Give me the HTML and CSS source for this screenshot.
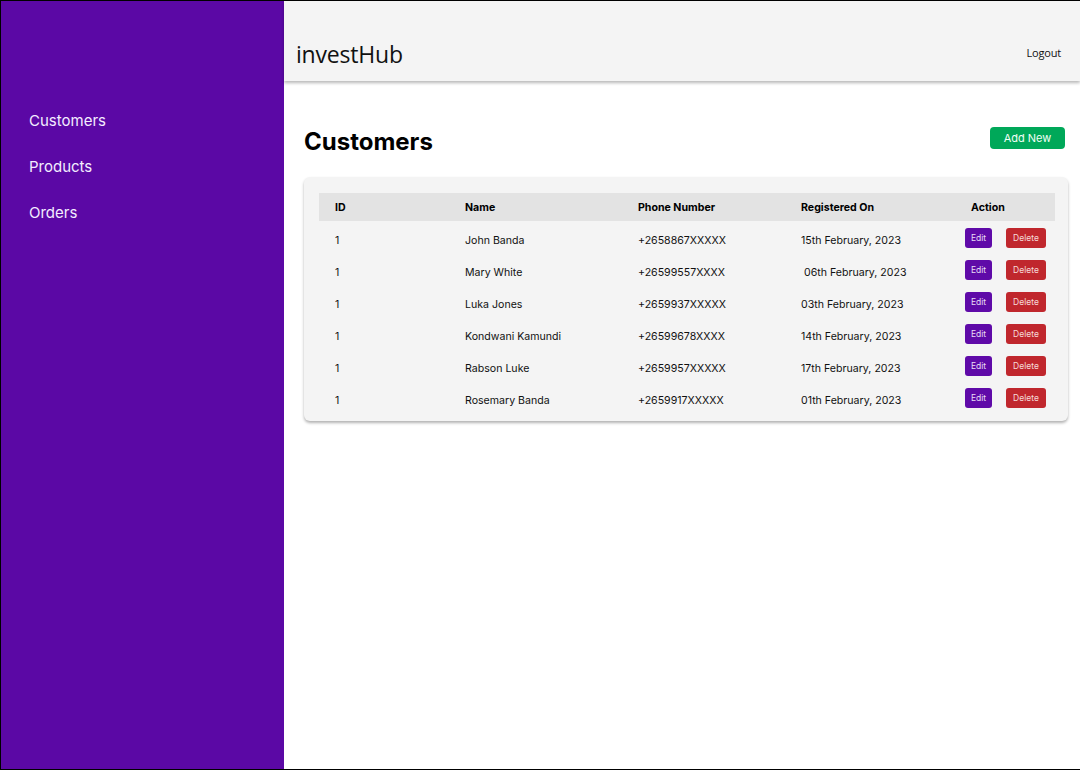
FILE: index.html
```html
<!DOCTYPE html>
<html>
<head>
<meta charset="utf-8">
<link rel="stylesheet" href="styles.css">
</head>
<body>
<div class="frame">
  <aside class="sidebar">
    <nav class="nav">
      <a class="nav-item">Customers</a>
      <a class="nav-item">Products</a>
      <a class="nav-item">Orders</a>
    </nav>
  </aside>
  <div class="main">
    <header class="topbar">
      <div class="brand">investHub</div>
      <div class="logout">Logout</div>
    </header>
    <section class="content">
      <div class="title-row">
        <h1 class="title">Customers</h1>
        <button class="btn-add">Add New</button>
      </div>
      <div class="card">
        <div class="table">
          <div class="row head">
            <div class="c c-id">ID</div>
            <div class="c">Name</div>
            <div class="c">Phone Number</div>
            <div class="c">Registered On</div>
            <div class="c c-act-h">Action</div>
          </div>
          <div class="row">
            <div class="c c-id">1</div>
            <div class="c">John Banda</div>
            <div class="c">+2658867XXXXX</div>
            <div class="c">15th February, 2023</div>
            <div class="c c-act"><button class="btn-edit">Edit</button><button class="btn-del">Delete</button></div>
          </div>
          <div class="row">
            <div class="c c-id">1</div>
            <div class="c">Mary White</div>
            <div class="c">+26599557XXXX</div>
            <div class="c c-shift">06th February, 2023</div>
            <div class="c c-act"><button class="btn-edit">Edit</button><button class="btn-del">Delete</button></div>
          </div>
          <div class="row">
            <div class="c c-id">1</div>
            <div class="c">Luka Jones</div>
            <div class="c">+2659937XXXXX</div>
            <div class="c">03th February, 2023</div>
            <div class="c c-act"><button class="btn-edit">Edit</button><button class="btn-del">Delete</button></div>
          </div>
          <div class="row">
            <div class="c c-id">1</div>
            <div class="c">Kondwani Kamundi</div>
            <div class="c">+26599678XXXX</div>
            <div class="c">14th February, 2023</div>
            <div class="c c-act"><button class="btn-edit">Edit</button><button class="btn-del">Delete</button></div>
          </div>
          <div class="row">
            <div class="c c-id">1</div>
            <div class="c">Rabson Luke</div>
            <div class="c">+2659957XXXXX</div>
            <div class="c">17th February, 2023</div>
            <div class="c c-act"><button class="btn-edit">Edit</button><button class="btn-del">Delete</button></div>
          </div>
          <div class="row">
            <div class="c c-id">1</div>
            <div class="c">Rosemary Banda</div>
            <div class="c">+2659917XXXXX</div>
            <div class="c">01th February, 2023</div>
            <div class="c c-act"><button class="btn-edit">Edit</button><button class="btn-del">Delete</button></div>
          </div>
        </div>
      </div>
    </section>
  </div>
</div>
</body>
</html>
```

FILE: styles.css
```css
* { box-sizing: border-box; }
html, body { margin: 0; padding: 0; background: #fff; }
body { font-family: Inter, "Liberation Sans", sans-serif; }

.frame {
  width: 1080px;
  height: 770px;
  display: flex;
  border-top: 1px solid #000;
  border-left: 1px solid #000;
  border-bottom: 1px solid #000;
  overflow: hidden;
}

.sidebar {
  width: 283px;
  flex: none;
  background: #5b08a5;
  padding: 97px 0 0 28px;
}
.nav { display: flex; flex-direction: column; }
.nav-item {
  color: #f3edff;
  font-size: 15px;
  line-height: 46px;
  font-family: Inter, sans-serif;
}

.main { flex: 1; display: flex; flex-direction: column; min-width: 0; }

.topbar {
  height: 80px;
  background: #f4f4f4;
  display: flex;
  align-items: center;
  justify-content: space-between;
  padding: 22px 18px 0 12px;
  box-shadow: 0 2px 3px rgba(0,0,0,0.28);
  position: relative;
  z-index: 1;
}
.brand {
  font-family: "Open Sans", "DejaVu Sans", sans-serif;
  font-size: 23px;
  color: #111;
  letter-spacing: -0.2px;
  margin-top: 3px;
}
.logout {
  font-family: "Open Sans", sans-serif;
  font-size: 11px;
  color: #111;
  letter-spacing: -0.2px;
  margin-right: 1px;
}

.content { padding: 45px 12px 0 20px; }

.title-row {
  display: flex;
  justify-content: space-between;
  align-items: flex-start;
}
.title {
  margin: 0;
  padding-top: 1px;
  font-size: 24px;
  line-height: 30px;
  font-weight: 700;
  color: #000;
}
.btn-add {
  margin: 1px 3px 0 0;
  width: 75px;
  height: 22px;
  border: none;
  border-radius: 4px;
  background: #00a859;
  color: #f0fff6;
  font-family: Inter, sans-serif;
  font-size: 11px;
  padding: 0;
}

.card {
  margin-top: 20px;
  background: #f4f4f4;
  border-radius: 6px;
  box-shadow: 0 2px 3px rgba(0,0,0,0.3);
  padding: 16px 13px 5px 15px;
}

.row {
  display: grid;
  grid-template-columns: 146px 173px 163px 164px 1fr;
  align-items: center;
  height: 32px;
  font-size: 10.6px;
  color: #111;
}
.row.head {
  height: 28px;
  background: #e3e3e3;
  font-weight: 700;
  margin-bottom: 3px;
  color: #000;
}
.c-id { padding-left: 16px; }
.c-act-h { padding-left: 6px; }
.c-shift { padding-left: 3px; }
.c-act { display: flex; gap: 14px; margin-bottom: 4px; }

.btn-edit, .btn-del {
  height: 20px;
  border: none;
  border-radius: 3px;
  color: #e8dcf5;
  font-family: Inter, sans-serif;
  font-size: 8.5px;
  padding: 0;
}
.btn-edit { width: 27px; background: #5f0aa8; }
.btn-del { width: 40px; background: #c0272d; color: #f6dada; }
```
